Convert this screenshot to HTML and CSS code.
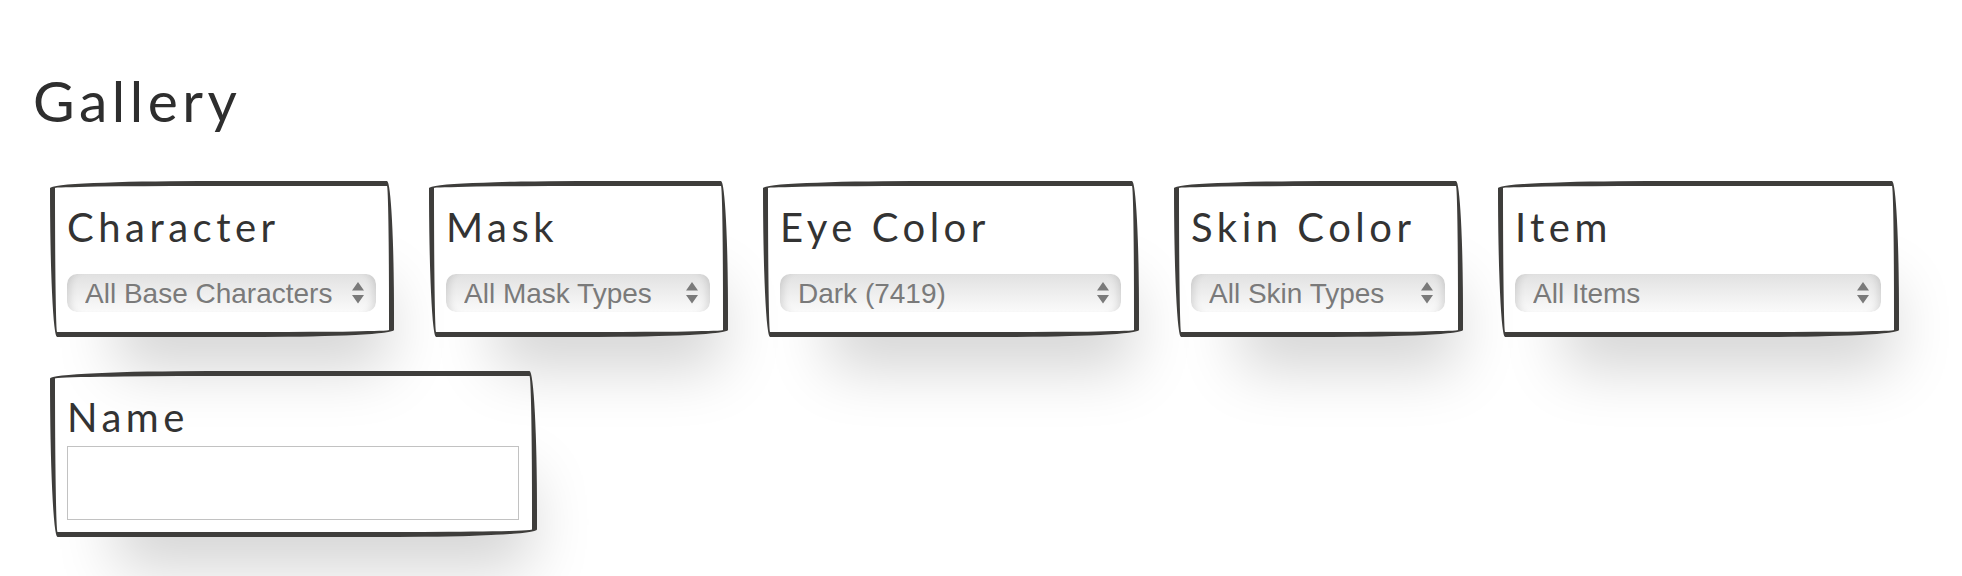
FILE: index.html
```html
<!DOCTYPE html>
<html lang="en">
<head>
    <meta charset="UTF-8">
    <meta name="viewport" content="width=device-width, initial-scale=1.0">
    <title>Gallery</title>
    <link rel="stylesheet" href="styles.css">
</head>
<body>
    <div class="page">
        <h1 class="title">Gallery</h1>

        <!-- filters : each one is a hand drawn box -->
        <div class="filters">
            <div class="filter">
                <label for="character">Character</label>
                <select id="character" class="pick pick-character">
                    <option>All Base Characters</option>
                </select>
            </div>
            <div class="filter">
                <label for="mask">Mask</label>
                <select id="mask" class="pick pick-mask">
                    <option>All Mask Types</option>
                </select>
            </div>
            <div class="filter">
                <label for="eye">Eye Color</label>
                <select id="eye" class="pick pick-eye">
                    <option>Dark (7419)</option>
                </select>
            </div>
            <div class="filter">
                <label for="skin">Skin Color</label>
                <select id="skin" class="pick pick-skin">
                    <option>All Skin Types</option>
                </select>
            </div>
            <div class="filter">
                <label for="item">Item</label>
                <select id="item" class="pick pick-item">
                    <option>All Items</option>
                </select>
            </div>
            <div class="filter">
                <label for="name">Name</label>
                <input type="text" id="name" class="name-box">
            </div>
        </div>
    </div>
</body>
</html>
```

FILE: styles.css
```css
body{
    margin: 0;
    min-height: 100vh;
    background: #fff;
    font-family: "Lato", "Open Sans", sans-serif;
    color: #333;
}

.page{
    padding: 62px 0 0 33px;
}

.title{
    margin: 0;
    font-size: 57px;
    font-weight: 400;
    line-height: 76px;
    letter-spacing: 4.5px;
    color: #2e2e2e;
}

.filters{
    display: flex;
    flex-wrap: wrap;
    gap: 34px 35px;
    margin-top: 43px;
    padding-left: 17px;
}

/* hand drawn border trick - uneven elliptical corners */
.filter{
    display: flex;
    flex-direction: column;
    align-items: flex-start;
    padding: 15px 13px 12px 12px;
    border: 5px solid #3e3d3b;
    border-radius: 255px 12px 225px 12px / 12px 225px 12px 255px;
    box-shadow: 30px 68px 60px -36px rgba(0, 0, 0, 0.17);
}

.filter label{
    font-size: 40px;
    line-height: 52px;
    letter-spacing: 4.5px;
    color: #333;
}

.pick{
    -webkit-appearance: none;
    appearance: none;
    height: 38px;
    margin: 21px 0 8px;
    padding: 0 36px 0 18px;
    border: none;
    border-radius: 10px;
    font-family: "Liberation Sans", Arial, sans-serif;
    font-size: 28px;
    color: #7a7a7a;
    background:
        url("data:image/svg+xml,%3Csvg xmlns='http://www.w3.org/2000/svg' width='12' height='22' viewBox='0 0 12 22'%3E%3Cpath d='M6 0L12 8.5H0Z M0 13H12L6 21.5Z' fill='%237a7a7a'/%3E%3C/svg%3E") no-repeat right 12px center / 12px 22px,
        linear-gradient(#e1e1e1, #eeeeee 50%, #fafafa);
    box-shadow: inset 9px 0 8px -7px rgba(0, 0, 0, 0.14), inset -9px 0 8px -7px rgba(0, 0, 0, 0.14);
}

.pick-character{ width: 309px; }
.pick-mask{ width: 264px; }
.pick-eye{ width: 341px; }
.pick-skin{ width: 254px; }
.pick-item{ width: 366px; }

.name-box{
    box-sizing: border-box;
    width: 452px;
    height: 74px;
    margin-top: 3px;
    border: 1px solid #c2c2c2;
    background: #fff;
    font-size: 24px;
}
```
